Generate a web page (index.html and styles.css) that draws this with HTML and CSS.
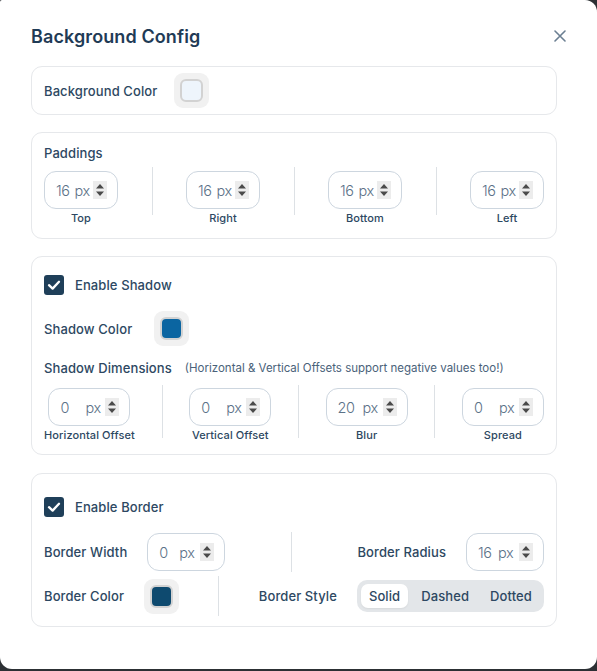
FILE: index.html
```html
<!DOCTYPE html>
<html lang="en">
<head>
<meta charset="utf-8">
<title>Background Config</title>
<link rel="stylesheet" href="styles.css">
</head>
<body>
<div class="modal">
  <header class="modal-header">
    <h2 class="title">Background Config</h2>
    <button class="close" aria-label="Close">
      <svg width="12" height="12" viewBox="0 0 12 12"><path d="M1 1 L11 11 M11 1 L1 11" stroke="#6b7f92" stroke-width="1.6" stroke-linecap="round" fill="none"/></svg>
    </button>
  </header>

  <div class="sections">
    <section class="card card-bg">
      <div class="inline-row gap-bg">
        <span class="label">Background Color</span>
        <span class="swatch"><span class="swatch-fill fill-light"></span></span>
      </div>
    </section>

    <section class="card card-pad">
      <div class="label line16">Paddings</div>
      <div class="field-row row-pad">
        <div class="field">
          <div class="num-input w74"><span class="num n18">16</span><span class="unit">px</span><span class="spin"><svg width="14" height="18" viewBox="0 0 14 18"><path d="M3 7.5 L7 3 L11 7.5 Z M3 10.5 L11 10.5 L7 15 Z" fill="#4a4a4a"/></svg></span></div>
          <div class="field-label">Top</div>
        </div>
        <div class="vdiv vdiv-pad"></div>
        <div class="field">
          <div class="num-input w74"><span class="num n18">16</span><span class="unit">px</span><span class="spin"><svg width="14" height="18" viewBox="0 0 14 18"><path d="M3 7.5 L7 3 L11 7.5 Z M3 10.5 L11 10.5 L7 15 Z" fill="#4a4a4a"/></svg></span></div>
          <div class="field-label">Right</div>
        </div>
        <div class="vdiv vdiv-pad"></div>
        <div class="field">
          <div class="num-input w74"><span class="num n18">16</span><span class="unit">px</span><span class="spin"><svg width="14" height="18" viewBox="0 0 14 18"><path d="M3 7.5 L7 3 L11 7.5 Z M3 10.5 L11 10.5 L7 15 Z" fill="#4a4a4a"/></svg></span></div>
          <div class="field-label">Bottom</div>
        </div>
        <div class="vdiv vdiv-pad"></div>
        <div class="field">
          <div class="num-input w74"><span class="num n18">16</span><span class="unit">px</span><span class="spin"><svg width="14" height="18" viewBox="0 0 14 18"><path d="M3 7.5 L7 3 L11 7.5 Z M3 10.5 L11 10.5 L7 15 Z" fill="#4a4a4a"/></svg></span></div>
          <div class="field-label">Left</div>
        </div>
      </div>
    </section>

    <section class="card card-shadow">
      <label class="check-row h34">
        <span class="checkbox"><svg width="20" height="20" viewBox="0 0 20 20"><path d="M5 10.2 L8.6 13.6 L15 6.8" stroke="#fff" stroke-width="2.3" fill="none" stroke-linecap="round" stroke-linejoin="round"/></svg></span>
        <span class="label">Enable Shadow</span>
      </label>
      <div class="inline-row gap-22 mt9">
        <span class="label">Shadow Color</span>
        <span class="swatch"><span class="swatch-fill fill-blue"></span></span>
      </div>
      <div class="dims-row mt14">
        <span class="label">Shadow Dimensions</span>
        <span class="note">(Horizontal &amp; Vertical Offsets support negative values too!)</span>
      </div>
      <div class="field-row row-shadow mt12">
        <div class="field">
          <div class="num-input w82"><span class="num n25">0</span><span class="unit">px</span><span class="spin"><svg width="14" height="18" viewBox="0 0 14 18"><path d="M3 7.5 L7 3 L11 7.5 Z M3 10.5 L11 10.5 L7 15 Z" fill="#4a4a4a"/></svg></span></div>
          <div class="field-label">Horizontal Offset</div>
        </div>
        <div class="vdiv vdiv-shadow"></div>
        <div class="field">
          <div class="num-input w82"><span class="num n25">0</span><span class="unit">px</span><span class="spin"><svg width="14" height="18" viewBox="0 0 14 18"><path d="M3 7.5 L7 3 L11 7.5 Z M3 10.5 L11 10.5 L7 15 Z" fill="#4a4a4a"/></svg></span></div>
          <div class="field-label">Vertical Offset</div>
        </div>
        <div class="vdiv vdiv-shadow"></div>
        <div class="field">
          <div class="num-input w82"><span class="num n25">20</span><span class="unit">px</span><span class="spin"><svg width="14" height="18" viewBox="0 0 14 18"><path d="M3 7.5 L7 3 L11 7.5 Z M3 10.5 L11 10.5 L7 15 Z" fill="#4a4a4a"/></svg></span></div>
          <div class="field-label">Blur</div>
        </div>
        <div class="vdiv vdiv-shadow"></div>
        <div class="field">
          <div class="num-input w82"><span class="num n25">0</span><span class="unit">px</span><span class="spin"><svg width="14" height="18" viewBox="0 0 14 18"><path d="M3 7.5 L7 3 L11 7.5 Z M3 10.5 L11 10.5 L7 15 Z" fill="#4a4a4a"/></svg></span></div>
          <div class="field-label">Spread</div>
        </div>
      </div>
    </section>

    <section class="card card-border">
      <label class="check-row h42">
        <span class="checkbox"><svg width="20" height="20" viewBox="0 0 20 20"><path d="M5 10.2 L8.6 13.6 L15 6.8" stroke="#fff" stroke-width="2.3" fill="none" stroke-linecap="round" stroke-linejoin="round"/></svg></span>
        <span class="label">Enable Border</span>
      </label>
      <div class="split-row mt4">
        <div class="inline-row gap-20">
          <span class="label">Border Width</span>
          <div class="num-input w78"><span class="num n20">0</span><span class="unit">px</span><span class="spin"><svg width="14" height="18" viewBox="0 0 14 18"><path d="M3 7.5 L7 3 L11 7.5 Z M3 10.5 L11 10.5 L7 15 Z" fill="#4a4a4a"/></svg></span></div>
        </div>
        <div class="vdiv vdiv-40"></div>
        <div class="inline-row gap-20">
          <span class="label">Border Radius</span>
          <div class="num-input w78"><span class="num n20">16</span><span class="unit">px</span><span class="spin"><svg width="14" height="18" viewBox="0 0 14 18"><path d="M3 7.5 L7 3 L11 7.5 Z M3 10.5 L11 10.5 L7 15 Z" fill="#4a4a4a"/></svg></span></div>
        </div>
      </div>
      <div class="split-row mt4">
        <div class="inline-row gap-20">
          <span class="label">Border Color</span>
          <span class="swatch"><span class="swatch-fill fill-navy"></span></span>
        </div>
        <div class="vdiv vdiv-40"></div>
        <div class="inline-row gap-20">
          <span class="label">Border Style</span>
          <div class="segmented">
            <span class="seg seg-active">Solid</span>
            <span class="seg">Dashed</span>
            <span class="seg">Dotted</span>
          </div>
        </div>
      </div>
    </section>
  </div>
</div>
</body>
</html>
```

FILE: styles.css
```css
html, body {
  margin: 0;
  padding: 0;
}

body {
  background: #2c3034;
  font-family: Inter, "Noto Sans", "Liberation Sans", sans-serif;
  color: #2b4660;
}

.modal {
  background: #ffffff;
  min-height: 669px;
  box-sizing: border-box;
  border-radius: 2px 12px 12px 12px;
  padding: 24px 40px 0 31px;
}

.modal-header {
  display: flex;
  align-items: center;
  justify-content: space-between;
  height: 24px;
  margin-right: -13px;
  margin-bottom: 18px;
}

.title {
  margin: 0;
  font-size: 18px;
  font-weight: 600;
  line-height: 24px;
  color: #1f3b56;
  letter-spacing: 0.1px;
  position: relative;
  top: 1px;
}

.close {
  width: 20px;
  height: 20px;
  padding: 0;
  border: 0;
  background: transparent;
  display: flex;
  align-items: center;
  justify-content: center;
  cursor: pointer;
}

.sections {
  display: flex;
  flex-direction: column;
  gap: 17px;
}

.card {
  border: 1px solid #e6e8eb;
  border-radius: 11px;
  padding: 12px;
}

.card-bg { padding: 6px 12px; }
.card-pad { padding: 12px 12px 13px; }
.card-shadow { padding: 11px 12px 12px; }
.card-border { padding: 12px 12px 10px; margin-top: 1px; }

.label {
  font-size: 13px;
  font-weight: 450;
  letter-spacing: 0.1px;
  color: #2d4862;
  white-space: nowrap;
}

.line16 { line-height: 16px; }

.inline-row {
  display: flex;
  align-items: center;
}

.gap-bg { gap: 17px; }
.gap-20 { gap: 20px; }
.gap-22 { gap: 22px; }

.mt4 { margin-top: 4px; }
.mt9 { margin-top: 9px; }
.mt12 { margin-top: 12px; }
.mt14 { margin-top: 14px; }

.swatch {
  width: 35px;
  height: 35px;
  border-radius: 9px;
  background: #f1f1f1;
  display: flex;
  align-items: center;
  justify-content: center;
}

.swatch-fill {
  width: 23px;
  height: 23px;
  box-sizing: border-box;
  border: 2px solid #d2d2d2;
  border-radius: 6px;
}

.fill-light { background: #eef5fc; }
.fill-blue { background: #0b65a1; }
.fill-navy { background: #0e4a6f; }

.field-row {
  display: flex;
  justify-content: space-between;
  align-items: flex-start;
}

.row-pad { margin-top: 10px; }

.field {
  display: flex;
  flex-direction: column;
  align-items: center;
}

.field-label {
  margin-top: 3px;
  font-size: 11px;
  line-height: 13px;
  font-weight: 450;
  letter-spacing: 0.1px;
  color: #2d4862;
  white-space: nowrap;
}

.vdiv {
  width: 1px;
  background: #dde1e5;
  flex: none;
}

.vdiv-pad { height: 48px; margin-top: -4px; }
.vdiv-shadow { height: 53px; margin-top: -3px; }
.vdiv-40 { height: 40px; }

.num-input {
  display: flex;
  align-items: center;
  height: 38px;
  box-sizing: border-box;
  border: 1px solid #cdd6df;
  border-radius: 12px;
  padding: 0 10px 0 11px;
  font-size: 14.5px;
  font-weight: 300;
  letter-spacing: -0.4px;
  color: #5c7288;
  flex: none;
}

.w74 { width: 74px; }
.w78 { width: 78px; }
.w82 { width: 82px; }

.num { display: inline-block; }
.n18 { width: 18.5px; }
.n20 { width: 20px; }
.n25 { width: 25px; }

.unit { display: inline-block; }

.spin {
  margin-left: auto;
  width: 14px;
  height: 18px;
  background: #ececec;
  display: flex;
}

.check-row {
  display: flex;
  align-items: center;
  gap: 11px;
}

.h34 { height: 34px; }
.h42 { height: 42px; }

.checkbox {
  width: 20px;
  height: 20px;
  border-radius: 3px;
  background: #1f3f59;
  display: flex;
  flex: none;
}

.dims-row {
  display: flex;
  align-items: center;
  gap: 13px;
  height: 16px;
}

.note {
  font-size: 11.5px;
  font-weight: 400;
  color: #4a627a;
  white-space: nowrap;
}

.split-row {
  display: flex;
  align-items: center;
  justify-content: space-between;
  height: 40px;
}

.segmented {
  display: flex;
  gap: 5px;
  padding: 4px;
  height: 32px;
  box-sizing: border-box;
  background: #e3e6e9;
  border-radius: 10px;
}

.seg {
  padding: 0 8px;
  height: 24px;
  line-height: 24px;
  border-radius: 7px;
  font-size: 13px;
  font-weight: 450;
  letter-spacing: 0.1px;
  color: #2d4862;
}

.seg-active {
  background: #ffffff;
  box-shadow: 0 1px 2px rgba(0, 0, 0, 0.06);
}
```
